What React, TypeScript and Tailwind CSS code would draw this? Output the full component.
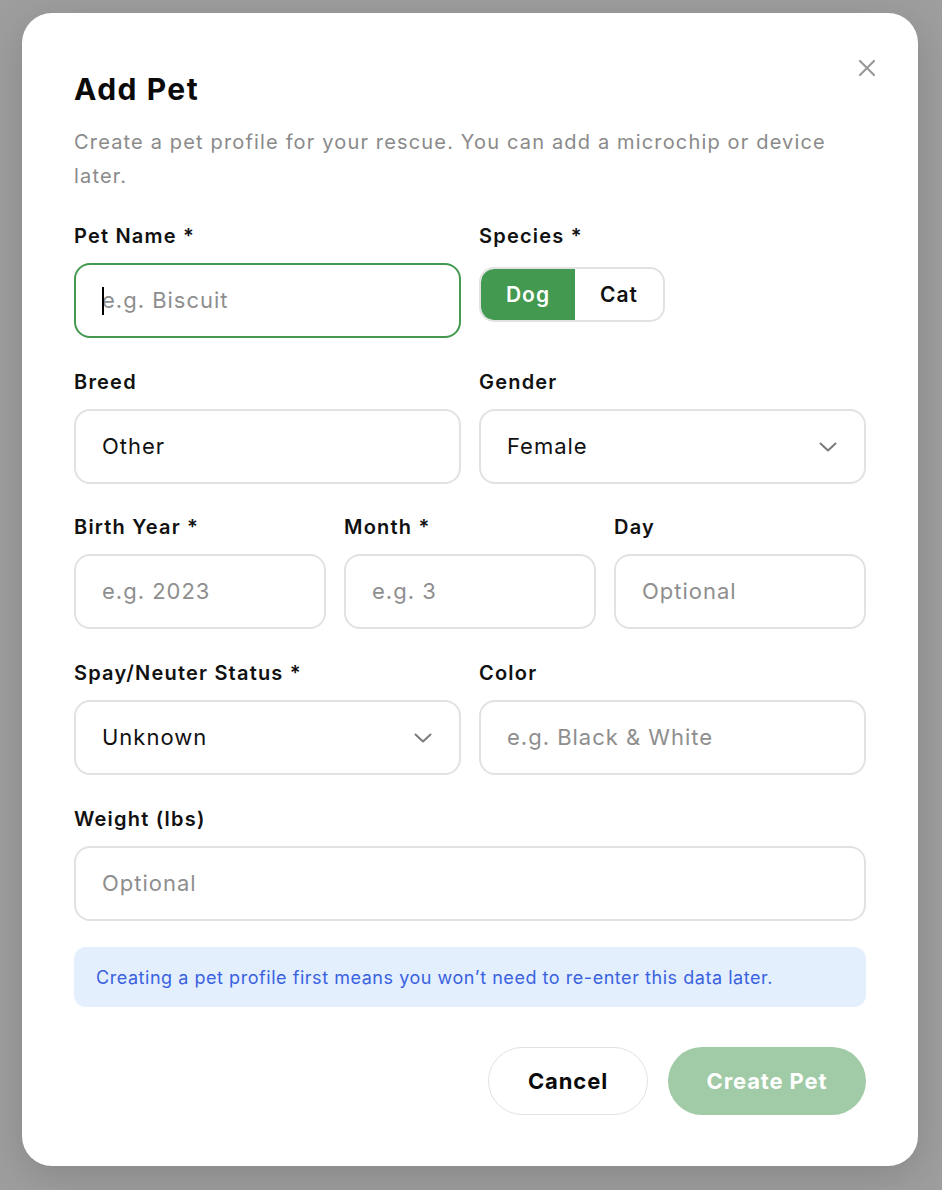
import React from "react";

const Chevron = () => (
  <svg width="18" height="10" viewBox="0 0 18 10" fill="none" className="shrink-0">
    <path d="M1.5 1.5 L9 8.5 L16.5 1.5" stroke="#7a7a7a" strokeWidth="2" strokeLinecap="round" strokeLinejoin="round" />
  </svg>
);

const Label = ({ children }: { children: React.ReactNode }) => (
  <div className="text-[20px] leading-[24px] font-semibold text-[#111] tracking-[0.06em]">{children}</div>
);

const Field = ({ placeholder, value }: { placeholder?: string; value?: string }) => (
  <div className="h-[75px] rounded-[16px] border-2 border-[#e2e2e2] bg-white flex items-center px-[26px] text-[22px] tracking-[0.045em]">
    {value ? <span className="text-[#111]">{value}</span> : <span className="text-[#8e8e8e]">{placeholder}</span>}
  </div>
);

const Select = ({ value }: { value: string }) => (
  <div className="h-[75px] rounded-[16px] border-2 border-[#e2e2e2] bg-white flex items-center justify-between pl-[26px] pr-[27px] text-[22px] text-[#111] tracking-[0.045em]">
    <span>{value}</span>
    <Chevron />
  </div>
);

export default function App() {
  return (
    <div
      className="w-[942px] h-[1190px] bg-[#9e9e9e] flex items-start pl-[22px] pt-[13px]"
      style={{ fontFamily: "Inter, 'Noto Sans', sans-serif" }}
    >
      <div className="relative w-[896px] h-[1153px] bg-white rounded-[30px] shadow-[0_10px_40px_rgba(0,0,0,0.15)] px-[52px] pt-[58px]">
        <button className="absolute right-[42px] top-[46px] w-[18px] h-[18px] flex items-center justify-center">
          <svg width="18" height="18" viewBox="0 0 18 18" fill="none">
            <path d="M2 2 L16 16 M16 2 L2 16" stroke="#9a9a9a" strokeWidth="2.2" strokeLinecap="round" />
          </svg>
        </button>
        <h1 className="text-[30px] leading-[36px] font-bold text-[#0a0a0a] tracking-[0.05em]">Add Pet</h1>
        <p className="mt-[18px] text-[20px] leading-[34px] text-[#8a8a8a] pr-[20px] tracking-[0.058em]">
          Create a pet profile for your rescue. You can add a microchip or device later.
        </p>

        <div className="mt-[31px] grid grid-cols-2 gap-x-[18px]">
          <div className="flex flex-col gap-[15px]">
            <Label>Pet Name *</Label>
            <div className="relative h-[75px] rounded-[16px] border-2 border-[#43994f] bg-white flex items-center px-[26px] text-[22px] tracking-[0.045em]">
              <span className="absolute left-[26px] top-[22px] w-[2px] h-[28px] bg-black" />
              <span className="text-[#8e8e8e]">e.g. Biscuit</span>
            </div>
          </div>
          <div className="flex flex-col gap-[15px]">
            <Label>Species *</Label>
            <div className="mt-[4px] w-[186px] h-[55px] rounded-[15px] border-2 border-[#e2e2e2] bg-white flex overflow-hidden text-[21px] font-semibold tracking-[0.05em]">
              <div className="w-[94px] bg-[#43994f] text-white flex items-center justify-center rounded-l-[13px]">Dog</div>
              <div className="flex-1 flex items-center justify-center text-[#111]">Cat</div>
            </div>
          </div>
        </div>

        <div className="mt-[32px] grid grid-cols-2 gap-x-[18px]">
          <div className="flex flex-col gap-[15px]">
            <Label>Breed</Label>
            <Field value="Other" />
          </div>
          <div className="flex flex-col gap-[15px]">
            <Label>Gender</Label>
            <Select value="Female" />
          </div>
        </div>

        <div className="mt-[31px] grid grid-cols-3 gap-x-[18px]">
          <div className="flex flex-col gap-[15px]">
            <Label>Birth Year *</Label>
            <Field placeholder="e.g. 2023" />
          </div>
          <div className="flex flex-col gap-[15px]">
            <Label>Month *</Label>
            <Field placeholder="e.g. 3" />
          </div>
          <div className="flex flex-col gap-[15px]">
            <Label>Day</Label>
            <Field placeholder="Optional" />
          </div>
        </div>

        <div className="mt-[32px] grid grid-cols-2 gap-x-[18px]">
          <div className="flex flex-col gap-[15px]">
            <Label>Spay/Neuter Status *</Label>
            <Select value="Unknown" />
          </div>
          <div className="flex flex-col gap-[15px]">
            <Label>Color</Label>
            <Field placeholder="e.g. Black & White" />
          </div>
        </div>

        <div className="mt-[32px] flex flex-col gap-[15px]">
          <Label>Weight (lbs)</Label>
          <Field placeholder="Optional" />
        </div>

        <div className="mt-[26px] h-[60px] rounded-[12px] bg-[#e3effd] flex items-center px-[22px] text-[18px] text-[#3a62e0] tracking-[0.03em]">
          Creating a pet profile first means you won’t need to re-enter this data later.
        </div>

        <div className="mt-[40px] flex justify-end gap-[20px]">
          <button className="w-[160px] h-[68px] rounded-full border border-[#e2e2e2] bg-white text-[22px] font-bold text-[#0a0a0a] tracking-[0.04em]">
            Cancel
          </button>
          <button className="w-[198px] h-[68px] rounded-full bg-[#a0cba6] text-[22px] font-bold text-white tracking-[0.04em]">
            Create Pet
          </button>
        </div>
      </div>
    </div>
  );
}
